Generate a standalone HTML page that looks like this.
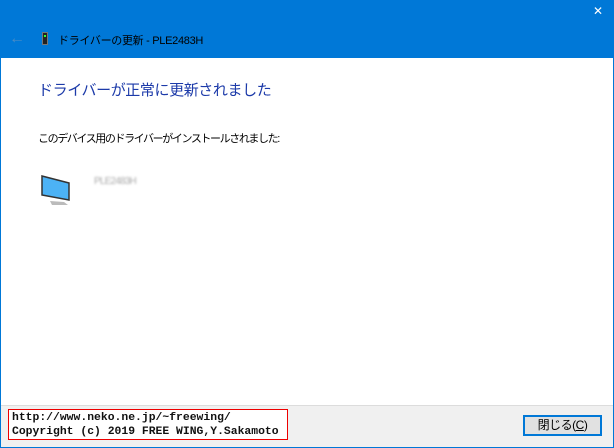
<!DOCTYPE html>
<html><head><meta charset="utf-8"><style>
*{margin:0;padding:0;box-sizing:border-box}
body{width:614px;height:448px;overflow:hidden;background:#0078d7;position:relative;font-family:"Liberation Sans","Noto Sans CJK JP",sans-serif}
.cl{position:absolute;left:593px;top:4px;color:#fff;font-size:12px}
.top{position:absolute;left:1px;top:28px;width:612px;height:30px;color:#000;font-size:12px}
.main{position:absolute;left:1px;top:58px;width:612px;height:347px;background:#fff}
.foot{position:absolute;left:1px;top:405px;width:612px;height:42px;background:#f0f0f0;border-top:1px solid #dcdcdc}
.t{position:absolute;white-space:nowrap}
</style></head><body>
<div class="cl">✕</div>
<div class="top">
<span class="t" style="left:8px;top:2px;color:#4a8bc4;font-size:16px">←</span>
<div class="t" style="left:41px;top:4px;width:6px;height:13px;background:#222;border:1px solid #777"><div style="width:2px;height:2px;background:#3f3;margin:2px 1px"></div></div>
<span class="t" style="left:57px;top:4px;font-size:11px;letter-spacing:-0.3px">ドライバーの更新 - PLE2483H</span>
</div>
<div class="main">
<span class="t" style="left:37px;top:21px;color:#1c3aa9;font-size:15px;letter-spacing:-0.4px">ドライバーが正常に更新されました</span>
<span class="t" style="left:37px;top:72px;font-size:11px;letter-spacing:-1.4px;color:#000">このデバイス用のドライバーがインストールされました:</span>
<svg class="t" style="left:39px;top:115px" width="32" height="34"><polygon points="2,3 29,10 29,27 2,22" fill="#4cb2f5" stroke="#333" stroke-width="1.5"/><polygon points="10,28 24,29 28,32 12,32" fill="#bbb"/></svg>
<span class="t" style="left:93px;top:118px;font-size:10px;letter-spacing:-0.8px;color:#aaa;filter:blur(1px)">PLE2483H</span>
</div>
<div class="foot">
<div class="t" style="left:7px;top:3px;width:280px;height:31px;border:1px solid #e00;background:#fff;font-family:'Liberation Mono',monospace;font-size:11.4px;line-height:14px;padding-left:3px;padding-top:1px;font-weight:bold;color:#111">http://www.neko.ne.jp/~freewing/<br>Copyright (c) 2019 FREE WING,Y.Sakamoto</div>
<div class="t" style="left:522px;top:9px;width:79px;height:21px;border:2px solid #0078d7;background:#e1e1e1;font-size:12px;text-align:center;line-height:17px;letter-spacing:-0.5px">閉じる(<u>C</u>)</div>
</div>
</body></html>
